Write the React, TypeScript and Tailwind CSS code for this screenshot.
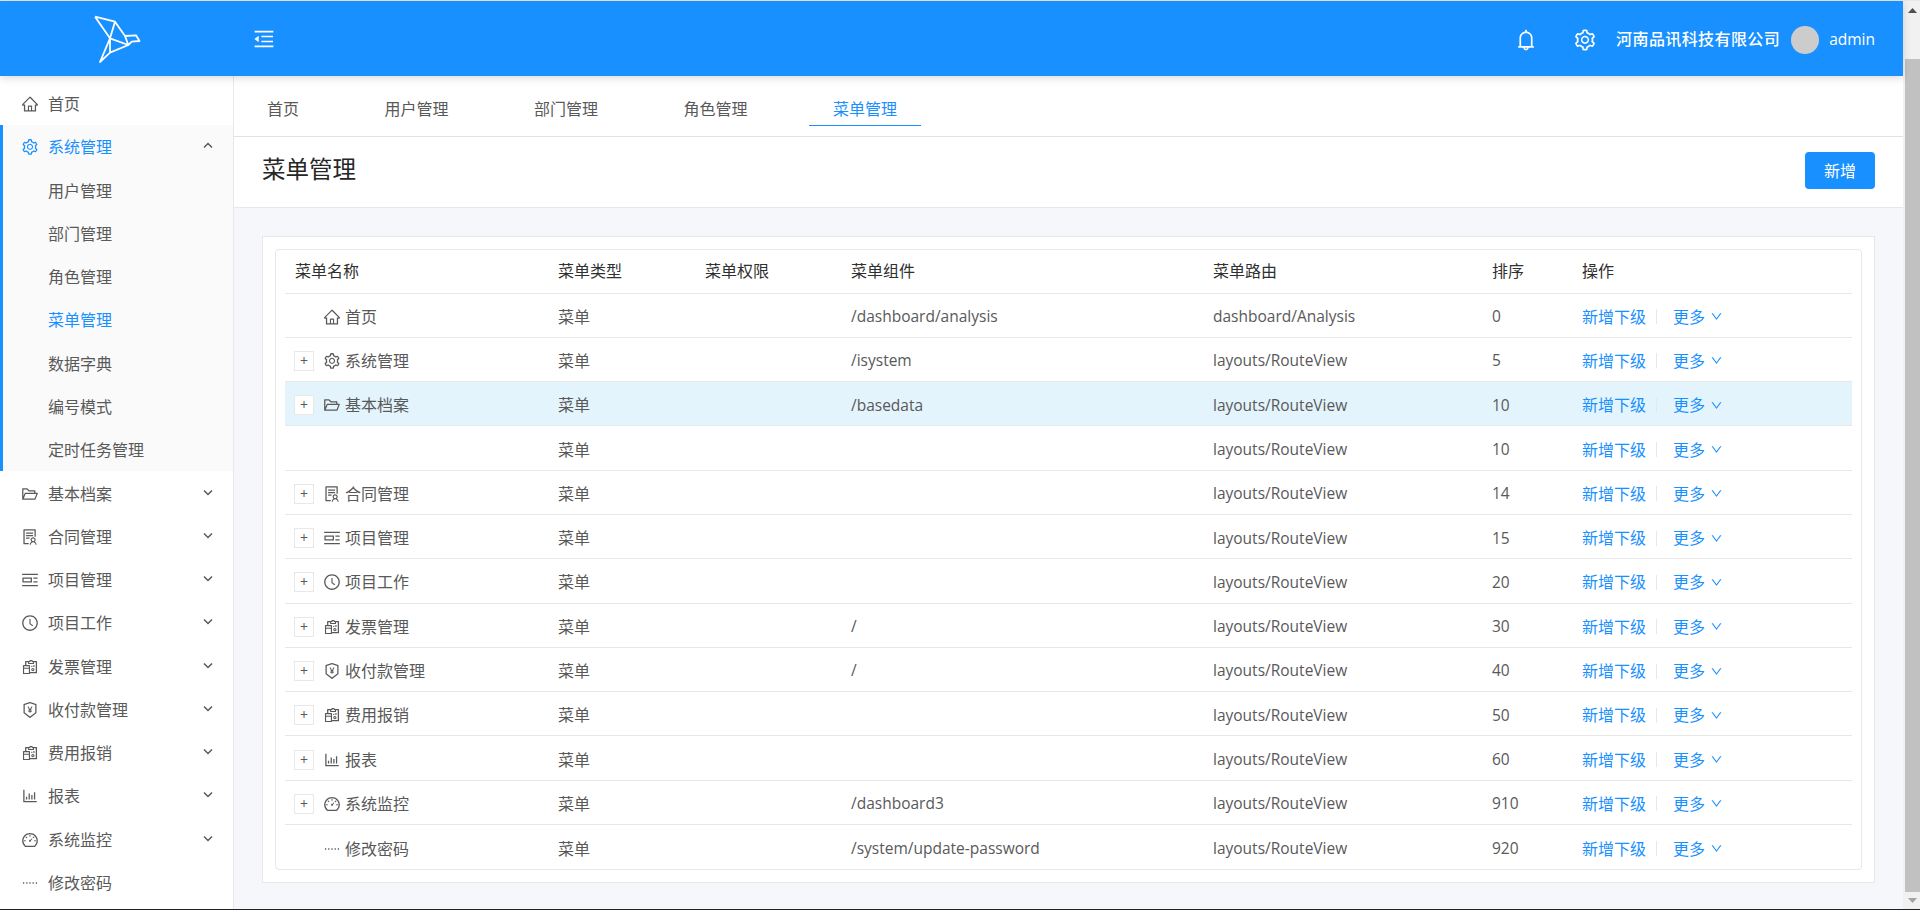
import React from "react";
import {
  AiOutlineHome,
  AiOutlineSetting,
  AiOutlineFolderOpen,
  AiOutlineSolution,
  AiOutlinePicLeft,
  AiOutlineClockCircle,
  AiOutlineReconciliation,
  AiOutlinePropertySafety,
  AiOutlineBarChart,
  AiOutlineDashboard,
  AiOutlineSmallDash,
  AiOutlineBell,
  AiOutlineMenuFold,
  AiOutlineDown,
} from "react-icons/ai";

type IconT = React.ComponentType<{ size?: number; className?: string }>;

const Chevron = ({ up }: { up?: boolean }) => (
  <svg width="10" height="7" viewBox="0 0 10 7" className="mb-[3px] mr-[3px]">
    <polyline
      points={up ? "1,5.5 5,1.5 9,5.5" : "1,1.5 5,5.5 9,1.5"}
      fill="none"
      stroke="#595959"
      strokeWidth="1.5"
    />
  </svg>
);

const Logo = () => (
  <svg width="50" height="50" viewBox="0 0 50 50" fill="none" stroke="#fff" strokeWidth="1.8" strokeLinejoin="round">
    <path d="M2 2.7 L22 7.7 L32 22 L35.3 31 L17 38.7 L7 48 L17 24.3 L22 7.7 M2 2.7 L17 24.3 L35.3 31 M17 24.3 L17 38.7 M32 22 L43 21.3 L46.5 27 L38.7 27.7 L35.3 31" />
  </svg>
);

const rowText = "text-[16px] text-[#595959]";

const sideTop: { icon: IconT; label: string }[] = [
  { icon: AiOutlineFolderOpen, label: "基本档案" },
  { icon: AiOutlineSolution, label: "合同管理" },
  { icon: AiOutlinePicLeft, label: "项目管理" },
  { icon: AiOutlineClockCircle, label: "项目工作" },
  { icon: AiOutlineReconciliation, label: "发票管理" },
  { icon: AiOutlinePropertySafety, label: "收付款管理" },
  { icon: AiOutlineReconciliation, label: "费用报销" },
  { icon: AiOutlineBarChart, label: "报表" },
  { icon: AiOutlineDashboard, label: "系统监控" },
];

const subs = ["用户管理", "部门管理", "角色管理", "菜单管理", "数据字典", "编号模式", "定时任务管理"];

const Sidebar = () => (
  <aside className="w-[234px] shrink-0 border-r border-[#e8e8e8] bg-white pt-[6.4px]">
    <div className={`flex h-[43px] items-center pl-[21px] ${rowText}`}>
      <AiOutlineHome size={18} />
      <span className="ml-[9px]">首页</span>
    </div>
    <div className="mb-[0.52px] h-[346px] border-l-[3px] border-[#1890ff] bg-[#fafafa] pt-[0.28px]">
      <div className="flex h-[43.28px] items-center justify-between pl-[18px] pr-[17px] text-[16px] text-[#1890ff]">
        <div className="flex items-center">
          <AiOutlineSetting size={18} />
          <span className="ml-[9px]">系统管理</span>
        </div>
        <Chevron up />
      </div>
      {subs.map((s) => (
        <div
          key={s}
          className={`flex h-[43.28px] items-center pl-[45px] text-[16px] ${
            s === "菜单管理" ? "text-[#1890ff]" : "text-[#595959]"
          }`}
        >
          {s}
        </div>
      ))}
    </div>
    {sideTop.map(({ icon: I, label }) => (
      <div key={label} className={`flex h-[43.28px] items-center justify-between pl-[21px] pr-[17px] ${rowText}`}>
        <div className="flex items-center">
          <I size={18} />
          <span className="ml-[9px]">{label}</span>
        </div>
        <Chevron />
      </div>
    ))}
    <div className={`flex h-[43.28px] items-center pl-[21px] ${rowText}`}>
      <AiOutlineSmallDash size={18} />
      <span className="ml-[9px]">修改密码</span>
    </div>
  </aside>
);

const Topbar = () => (
  <header className="relative z-10 flex h-[75px] shrink-0 items-center bg-[#1890ff] text-white shadow-[0_2px_8px_rgba(0,0,0,0.15)]">
    <div className="ml-[93px] mt-[1px] flex items-center">
      <Logo />
    </div>
    <AiOutlineMenuFold size={24} className="ml-[109px] mt-[1px]" />
    <div className="ml-auto mr-[28px] flex items-center">
      <AiOutlineBell size={24} className="mt-[2px]" />
      <AiOutlineSetting size={24} className="ml-[35px] mt-[2px]" />
      <span className="ml-[19px] mt-[1px] text-[16px] font-medium tracking-[0.4px]">河南品讯科技有限公司</span>
      <div className="ml-[11px] mt-[2px] h-[28px] w-[28px] rounded-full bg-[#cccccc]" />
      <span className="ml-[10px] mt-[2px] text-[15.5px] font-medium">admin</span>
    </div>
  </header>
);

const tabs = ["首页", "用户管理", "部门管理", "角色管理", "菜单管理"];

const Tabs = () => (
  <div className="flex h-[61px] shrink-0 gap-[37.5px] border-b border-[#e2e2e2] bg-white pl-[9px] pt-[16px]">
    {tabs.map((t) => (
      <div
        key={t}
        className={`flex h-[34px] items-center px-[24px] text-[16px] ${
          t === "菜单管理" ? "border-b border-[#1890ff] text-[#1890ff]" : "text-[#595959]"
        }`}
      >
        {t}
      </div>
    ))}
  </div>
);

type Row = { icon?: IconT; name?: string; expand: boolean; comp: string; route: string; sort: string; hl?: boolean };

const RV = "layouts/RouteView";
const rows: Row[] = [
  { icon: AiOutlineHome, name: "首页", expand: false, comp: "/dashboard/analysis", route: "dashboard/Analysis", sort: "0" },
  { icon: AiOutlineSetting, name: "系统管理", expand: true, comp: "/isystem", route: RV, sort: "5" },
  { icon: AiOutlineFolderOpen, name: "基本档案", expand: true, comp: "/basedata", route: RV, sort: "10", hl: true },
  { expand: false, comp: "", route: RV, sort: "10" },
  { icon: AiOutlineSolution, name: "合同管理", expand: true, comp: "", route: RV, sort: "14" },
  { icon: AiOutlinePicLeft, name: "项目管理", expand: true, comp: "", route: RV, sort: "15" },
  { icon: AiOutlineClockCircle, name: "项目工作", expand: true, comp: "", route: RV, sort: "20" },
  { icon: AiOutlineReconciliation, name: "发票管理", expand: true, comp: "/", route: RV, sort: "30" },
  { icon: AiOutlinePropertySafety, name: "收付款管理", expand: true, comp: "/", route: RV, sort: "40" },
  { icon: AiOutlineReconciliation, name: "费用报销", expand: true, comp: "", route: RV, sort: "50" },
  { icon: AiOutlineBarChart, name: "报表", expand: true, comp: "", route: RV, sort: "60" },
  { icon: AiOutlineDashboard, name: "系统监控", expand: true, comp: "/dashboard3", route: RV, sort: "910" },
  { icon: AiOutlineSmallDash, name: "修改密码", expand: false, comp: "/system/update-password", route: RV, sort: "920" },
];

const grid = "grid grid-cols-[263px_147px_146px_362px_279px_90px_280px] items-center";
const heads = ["菜单名称", "菜单类型", "菜单权限", "菜单组件", "菜单路由", "排序", "操作"];

const Table = () => (
  <div className="rounded-[4px] border border-[#e8e8e8] px-[9px]">
    <div className={`${grid} h-[43.5px] border-b border-[#e8e8e8] text-[16px] text-[#303030]`}>
      {heads.map((h) => (
        <div key={h} className="pl-[10px]">
          {h}
        </div>
      ))}
    </div>
    {rows.map((r, i) => {
      const I = r.icon;
      return (
        <div
          key={i}
          className={`${grid} h-[44.3px] pt-[3px] ${i < rows.length - 1 ? "border-b border-[#e8e8e8]" : ""} ${
            r.hl ? "bg-[#e3f4fd]" : ""
          } text-[#595959]`}
        >
          <div className="flex items-center pl-[9px] text-[16px]">
            {r.expand ? (
              <div className="flex h-[20px] w-[20px] items-center justify-center border border-[#e8e8e8] bg-white text-[14px] leading-none text-[#595959]">
                +
              </div>
            ) : (
              <div className="h-[20px] w-[20px]" />
            )}
            {I && <I size={18} className="ml-[9px]" />}
            {r.name && <span className="ml-[4px]">{r.name}</span>}
          </div>
          <div className="pl-[10px] text-[16px]">菜单</div>
          <div />
          <div className="pl-[10px] text-[15.5px]">{r.comp}</div>
          <div className="pl-[10px] text-[15.5px]">{r.route}</div>
          <div className="pl-[10px] text-[15.5px]">{r.sort}</div>
          <div className="flex items-center pl-[10px] text-[16px] text-[#1890ff]">
            <span>新增下级</span>
            <span className="ml-[10px] h-[15px] w-px bg-[#e8e8e8]" />
            <span className="ml-[16px]">更多</span>
            <AiOutlineDown size={13} className="ml-[5px]" />
          </div>
        </div>
      );
    })}
  </div>
);

const Scrollbar = () => (
  <div className="flex w-[17px] shrink-0 flex-col bg-[#f1f1f1]">
    <div className="flex h-[58px] shrink-0 justify-center pt-[7px]">
      <svg width="9" height="5" viewBox="0 0 9 5" className="ml-[1px]">
        <polygon points="0,5 4.5,0 9,5" fill="#505050" />
      </svg>
    </div>
    <div className="ml-[2px] flex-1 bg-[#c1c1c1]" />
    <div className="flex h-[17px] shrink-0 justify-center pt-[6px]">
      <svg width="9" height="5" viewBox="0 0 9 5" className="ml-[1px]">
        <polygon points="0,0 9,0 4.5,5" fill="#a3a3a3" />
      </svg>
    </div>
  </div>
);

export default function App() {
  return (
    <div className="flex h-[910px] flex-col overflow-hidden bg-white [font-family:'Open_Sans','Noto_Sans_CJK_SC',sans-serif]">
      <div className="h-px shrink-0 bg-[#e8e8e8]" />
      <div className="flex min-h-0 flex-1">
        <div className="flex min-w-0 flex-1 flex-col">
          <Topbar />
          <div className="flex min-h-0 flex-1">
            <Sidebar />
            <main className="flex min-w-0 flex-1 flex-col bg-[#f5f7fa]">
              <Tabs />
              <div className="flex h-[71px] shrink-0 items-center justify-between border-b border-[#ece6ec] bg-white pb-[4px] pl-[28px] pr-[28px]">
                <h1 className="text-[23.5px] font-normal text-[#262626]">菜单管理</h1>
                <button className="h-[37px] w-[70px] rounded-[4px] bg-[#1890ff] pt-[1px] text-[16px] text-white">新增</button>
              </div>
              <div className="px-[28px] pt-[28px]">
                <div className="border border-[#e8e8e8] bg-white p-[12px]">
                  <Table />
                </div>
              </div>
            </main>
          </div>
        </div>
        <Scrollbar />
      </div>
      <div className="h-px shrink-0 bg-[#222222]" />
    </div>
  );
}
